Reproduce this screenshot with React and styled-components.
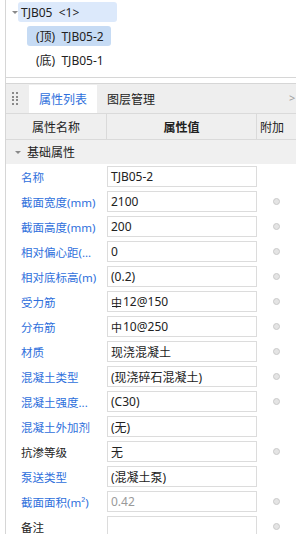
import React from 'react'
import styled, { createGlobalStyle } from 'styled-components'

const Global = createGlobalStyle`
  html, body { margin: 0; padding: 0; background: #fff; overflow: hidden; }
  body { font-family: "Noto Sans", "Noto Sans CJK SC", sans-serif; font-size: 12px; color: #222; }
`

const Frame = styled.div`
  margin-left: 5px;
  border-left: 1px solid #d6d6d6;
  height: 534px;
  width: 290px;
  overflow: hidden;
  display: flex;
  flex-direction: column;
`

const Tree = styled.div`
  height: 78px;
  flex-shrink: 0;
  border-bottom: 1px solid #d6d6d6;
  padding-top: 2px;
  box-sizing: border-box;
  display: flex;
  flex-direction: column;
  gap: 4px;
`

const TreeRow = styled.div`
  display: flex;
  align-items: center;
  height: 20px;
  padding-left: ${p => p.indent}px;
`

const Caret = styled.span`
  width: 0;
  height: 0;
  border-left: 3px solid transparent;
  border-right: 3px solid transparent;
  border-top: 3px solid #8a8a8a;
  margin-right: ${p => p.gap || 0}px;
`

const Chip = styled.div`
  height: 20px;
  width: ${p => p.w}px;
  box-sizing: border-box;
  padding-left: ${p => p.pad}px;
  border-radius: 3px;
  background: ${p => p.bg || 'transparent'};
  display: flex;
  align-items: center;
  white-space: pre;
  color: #222;
`

const TabBar = styled.div`
  margin-top: 5px;
  height: 29px;
  flex-shrink: 0;
  border-top: 1px solid #d6d6d6;
  background: #eeeeee;
  display: flex;
  align-items: stretch;
  position: relative;
`

const Grip = styled.div`
  width: 23px;
  display: grid;
  grid-template-columns: 2px 2px;
  grid-auto-rows: 2px;
  column-gap: 2px;
  row-gap: 1.5px;
  align-content: center;
  padding-left: 6px;
  box-sizing: border-box;
  span { background: #8a8a8a; }
`

const Tab = styled.div`
  width: ${p => p.w}px;
  padding-left: 10px;
  box-sizing: border-box;
  display: flex;
  align-items: center;
  background: ${p => (p.active ? '#fff' : 'transparent')};
  color: ${p => (p.active ? '#2e6fdc' : '#222')};
  margin-top: 1px;
`

const Chevron = styled.span`
  position: absolute;
  left: 283px;
  top: 6px;
  color: #a0a0a0;
  font-size: 11px;
`

const Header = styled.div`
  display: grid;
  grid-template-columns: 100px 150px 1fr;
  height: 25px;
  flex-shrink: 0;
  background: #efefef;
  border-top: 1px solid #dadada;
  border-bottom: 1px solid #dadada;
`

const HeadCell = styled.div`
  display: flex;
  align-items: center;
  justify-content: ${p => (p.left ? 'flex-start' : 'center')};
  padding-left: ${p => (p.left ? 3 : 0)}px;
  border-left: ${p => (p.first ? 'none' : '1px solid #dadada')};
  font-weight: ${p => (p.bold ? 700 : 400)};
  color: #222;
`

const Group = styled.div`
  height: 24px;
  flex-shrink: 0;
  background: #f0f0f0;
  display: flex;
  align-items: center;
  padding-left: 9px;
  color: #222;
`

const Rows = styled.div`
  display: flex;
  flex-direction: column;
`

const Row = styled.div`
  display: grid;
  grid-template-columns: 101px 150px 1fr;
  height: 25px;
  flex-shrink: 0;
  align-items: center;
`

const Label = styled.div`
  padding-left: 15px;
  font-size: 11.5px;
  color: ${p => (p.plain ? '#222' : '#2e6fdc')};
  white-space: nowrap;
  overflow: hidden;
`

const Field = styled.div`
  height: 21px;
  box-sizing: border-box;
  border: 1px solid #dcdcdc;
  background: #fff;
  padding-left: 3px;
  display: flex;
  align-items: center;
  color: ${p => (p.muted ? '#9a9a9a' : '#222')};
  white-space: nowrap;
`

const Dot = styled.span`
  width: 7px;
  height: 7px;
  border-radius: 50%;
  background: #e4e4e4;
  border: 1px solid #cacaca;
  box-sizing: border-box;
  margin-left: 16px;
  visibility: ${p => (p.show ? 'visible' : 'hidden')};
`

const Rebar = styled.span`
  position: relative;
  display: inline-block;
  font-family: "Noto Sans CJK SC", sans-serif;
  font-size: 11px;
  margin-right: 1px;
  &::after {
    content: '';
    display: ${p => (p.grade ? 'block' : 'none')};
    position: absolute;
    left: 1px;
    right: 1px;
    bottom: 3px;
    height: 1px;
    background: #222;
  }
`

const props = [
  { name: '名称', value: 'TJB05-2' },
  { name: '截面宽度(mm)', value: '2100', dot: true },
  { name: '截面高度(mm)', value: '200', dot: true },
  { name: '相对偏心距(...', value: '0', dot: true },
  { name: '相对底标高(m)', value: '(0.2)', dot: true },
  { name: '受力筋', value: '12@150', bar: 'grade', dot: true },
  { name: '分布筋', value: '10@250', bar: 'plain', dot: true },
  { name: '材质', value: '现浇混凝土', dot: true },
  { name: '混凝土类型', value: '(现浇碎石混凝土)', dot: true },
  { name: '混凝土强度...', value: '(C30)', dot: true },
  { name: '混凝土外加剂', value: '(无)' },
  { name: '抗渗等级', value: '无', dot: true, plain: true },
  { name: '泵送类型', value: '(混凝土泵)' },
  { name: '截面面积(m²)', value: '0.42', dot: true, muted: true },
  { name: '备注', value: '', dot: true, plain: true },
]

const App = () => {
  return (
    <>
      <Global />
      <Frame>
        <Tree>
          <TreeRow indent={6}>
            <Caret />
            <Chip w={99} pad={3} bg="#dce9fb">TJB05  &lt;1&gt;</Chip>
          </TreeRow>
          <TreeRow indent={21}>
            <Chip w={84} pad={9} bg="#c6dbf4">(顶)  TJB05-2</Chip>
          </TreeRow>
          <TreeRow indent={21}>
            <Chip w={84} pad={9}>(底)  TJB05-1</Chip>
          </TreeRow>
        </Tree>

        <TabBar>
          <Grip>
            {Array.from({ length: 8 }).map((_, i) => <span key={i} />)}
          </Grip>
          <Tab w={68} active>属性列表</Tab>
          <Tab w={80}>图层管理</Tab>
          <Chevron>&gt;</Chevron>
        </TabBar>

        <Header>
          <HeadCell first>属性名称</HeadCell>
          <HeadCell bold>属性值</HeadCell>
          <HeadCell left>附加</HeadCell>
        </Header>

        <Group>
          <Caret gap={6} />
          基础属性
        </Group>

        <Rows>
          {props.map(p => (
            <Row key={p.name}>
              <Label plain={p.plain}>{p.name}</Label>
              <Field muted={p.muted}>
                {p.bar && <Rebar grade={p.bar === 'grade'}>中</Rebar>}
                {p.value}
              </Field>
              <Dot show={p.dot} />
            </Row>
          ))}
        </Rows>
      </Frame>
    </>
  )
}

export default App
